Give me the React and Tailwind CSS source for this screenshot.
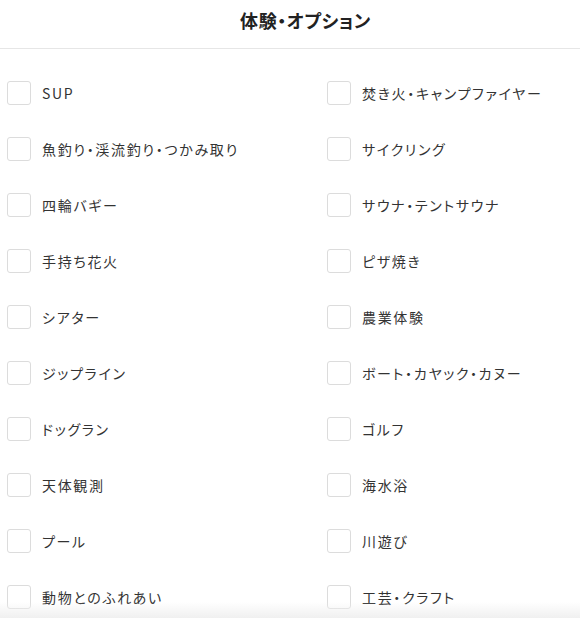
const left = [
  'SUP',
  '魚釣り・渓流釣り・つかみ取り',
  '四輪バギー',
  '手持ち花火',
  'シアター',
  'ジップライン',
  'ドッグラン',
  '天体観測',
  'プール',
  '動物とのふれあい',
]

const right = [
  '焚き火・キャンプファイヤー',
  'サイクリング',
  'サウナ・テントサウナ',
  'ピザ焼き',
  '農業体験',
  'ボート・カヤック・カヌー',
  'ゴルフ',
  '海水浴',
  '川遊び',
  '工芸・クラフト',
]

function Option({ label }) {
  return (
    <label className="flex h-14 items-center gap-[11px] cursor-pointer">
      <input type="checkbox" className="peer sr-only" />
      <span className="h-6 w-6 shrink-0 rounded-[3px] border border-[#dcdcdc] bg-white" />
      <span className="whitespace-nowrap text-[14px] leading-5 tracking-[0.12em] text-[#333] [font-feature-settings:'palt']">
        {label}
      </span>
    </label>
  )
}

export default function App() {
  const rows = left.map((l, i) => [l, right[i]])
  return (
    <div
      className="relative h-[618px] w-[580px] overflow-hidden bg-white"
      style={{ fontFamily: '"Noto Sans CJK JP", "Noto Sans", sans-serif' }}
    >
      <div className="flex h-[49px] justify-center border-b border-[#e6e6e6] pl-[31px] pt-[7px]">
        <h2 className="text-[18px] leading-[27px] font-bold tracking-[0.03em] text-[#222] [font-feature-settings:'palt']">
          体験・オプション
        </h2>
      </div>

      <div className="grid grid-cols-[320px_1fr] pl-[7px] pt-4">
        {rows.map(([l, r]) => (
          <div key={l} className="contents">
            <Option label={l} />
            <Option label={r} />
          </div>
        ))}
      </div>

      <div className="pointer-events-none absolute bottom-0 left-0 h-4 w-full bg-gradient-to-b from-white/0 to-[#f0f0f0]" />
    </div>
  )
}
